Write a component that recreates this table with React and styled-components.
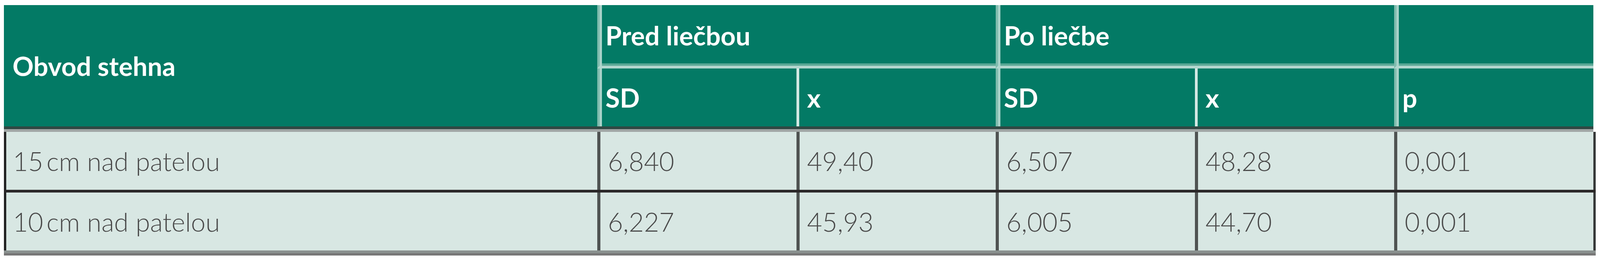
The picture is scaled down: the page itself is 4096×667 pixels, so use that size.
import React from 'react';
import styled, { createGlobalStyle } from 'styled-components';

const GlobalStyle = createGlobalStyle`
  html, body { margin: 0; padding: 0; background: #ffffff; }
  body { font-family: Lato, "Open Sans", "Noto Sans", sans-serif; }
`;

const COLS = '1519px repeat(5, 510px)';

const Table = styled.div`
  display: flex;
  flex-direction: column;
  width: 4075px;
  margin: 13px 0 0 10px;
`;

const Header = styled.div`
  display: grid;
  width: 4069px;
  grid-template-columns: ${COLS};
  grid-template-rows: 162px 148px;
  background: #037a65;
  color: #ffffff;
`;

const HeadCell = styled.div`
  box-sizing: border-box;
  display: flex;
  align-items: center;
  padding-left: ${(p) => (p.$divider === 'major' ? 15 : p.$divider === 'minor' ? 20 : 22)}px;
  font-size: 67px;
  font-weight: 700;
  line-height: 1;
  white-space: nowrap;
  grid-column: ${(p) => p.$col || 'auto'};
  grid-row: ${(p) => p.$row || 'auto'};
  border-left: ${(p) =>
    p.$divider === 'major' ? '6px solid #80bcae' : p.$divider === 'minor' ? '7px solid #d3e8e3' : 'none'};
  border-bottom: ${(p) => (p.$group ? '7px solid #b2d6ce' : 'none')};
  box-shadow: ${(p) => {
    const s = [];
    if (p.$divider === 'major') s.push('inset 6px 0 0 #a9d2c9');
    if (p.$group) s.push('inset 0 -6px 0 #5aa896');
    return s.length ? s.join(', ') : 'none';
  }};
`;

const HeadRule = styled.div`
  width: 4069px;
  height: 14px;
  background: linear-gradient(#314843 0 50%, #a0a6a5 50% 100%);
`;

const BodyRow = styled.div`
  display: grid;
  grid-template-columns: ${COLS};
  height: 148px;
  background: #d8e7e3;
  border-right: 6px solid #363838;
  color: #4a4a4a;
`;

const Cell = styled.div`
  box-sizing: border-box;
  display: flex;
  align-items: center;
  padding-left: ${(p) => (p.$first ? 17 : 19)}px;
  border-left: ${(p) => (p.$first ? '6px solid #242424' : '8px solid #4f5352')};
  font-size: 67px;
  font-weight: 300;
  line-height: 1;
  white-space: nowrap;
`;

const RowRule = styled.div`
  height: 7px;
  background: #2b2829;
`;

const BottomRule = styled.div`
  height: 13px;
  background: linear-gradient(#8a918f 0 54%, #777777 54% 100%);
`;

const rows = [
  ['15\u2009cm nad patelou', '6,840', '49,40', '6,507', '48,28', '0,001'],
  ['10\u2009cm nad patelou', '6,227', '45,93', '6,005', '44,70', '0,001'],
];

export default function App() {
  return (
    <>
      <GlobalStyle />
      <Table>
        <Header>
          <HeadCell $col="1" $row="1 / span 2">Obvod stehna</HeadCell>
          <HeadCell $col="2 / span 2" $row="1" $divider="major" $group>Pred liečbou</HeadCell>
          <HeadCell $col="4 / span 2" $row="1" $divider="major" $group>Po liečbe</HeadCell>
          <HeadCell $col="6" $row="1" $divider="major" $group />
          <HeadCell $col="2" $row="2" $divider="major">SD</HeadCell>
          <HeadCell $col="3" $row="2" $divider="minor">x</HeadCell>
          <HeadCell $col="4" $row="2" $divider="major">SD</HeadCell>
          <HeadCell $col="5" $row="2" $divider="minor">x</HeadCell>
          <HeadCell $col="6" $row="2" $divider="major">p</HeadCell>
        </Header>
        <HeadRule />
        {rows.map((row, i) => (
          <React.Fragment key={row[0]}>
            {i > 0 && <RowRule />}
            <BodyRow>
              {row.map((v, j) => (
                <Cell key={j} $first={j === 0}>{v}</Cell>
              ))}
            </BodyRow>
          </React.Fragment>
        ))}
        <BottomRule />
      </Table>
    </>
  );
}
